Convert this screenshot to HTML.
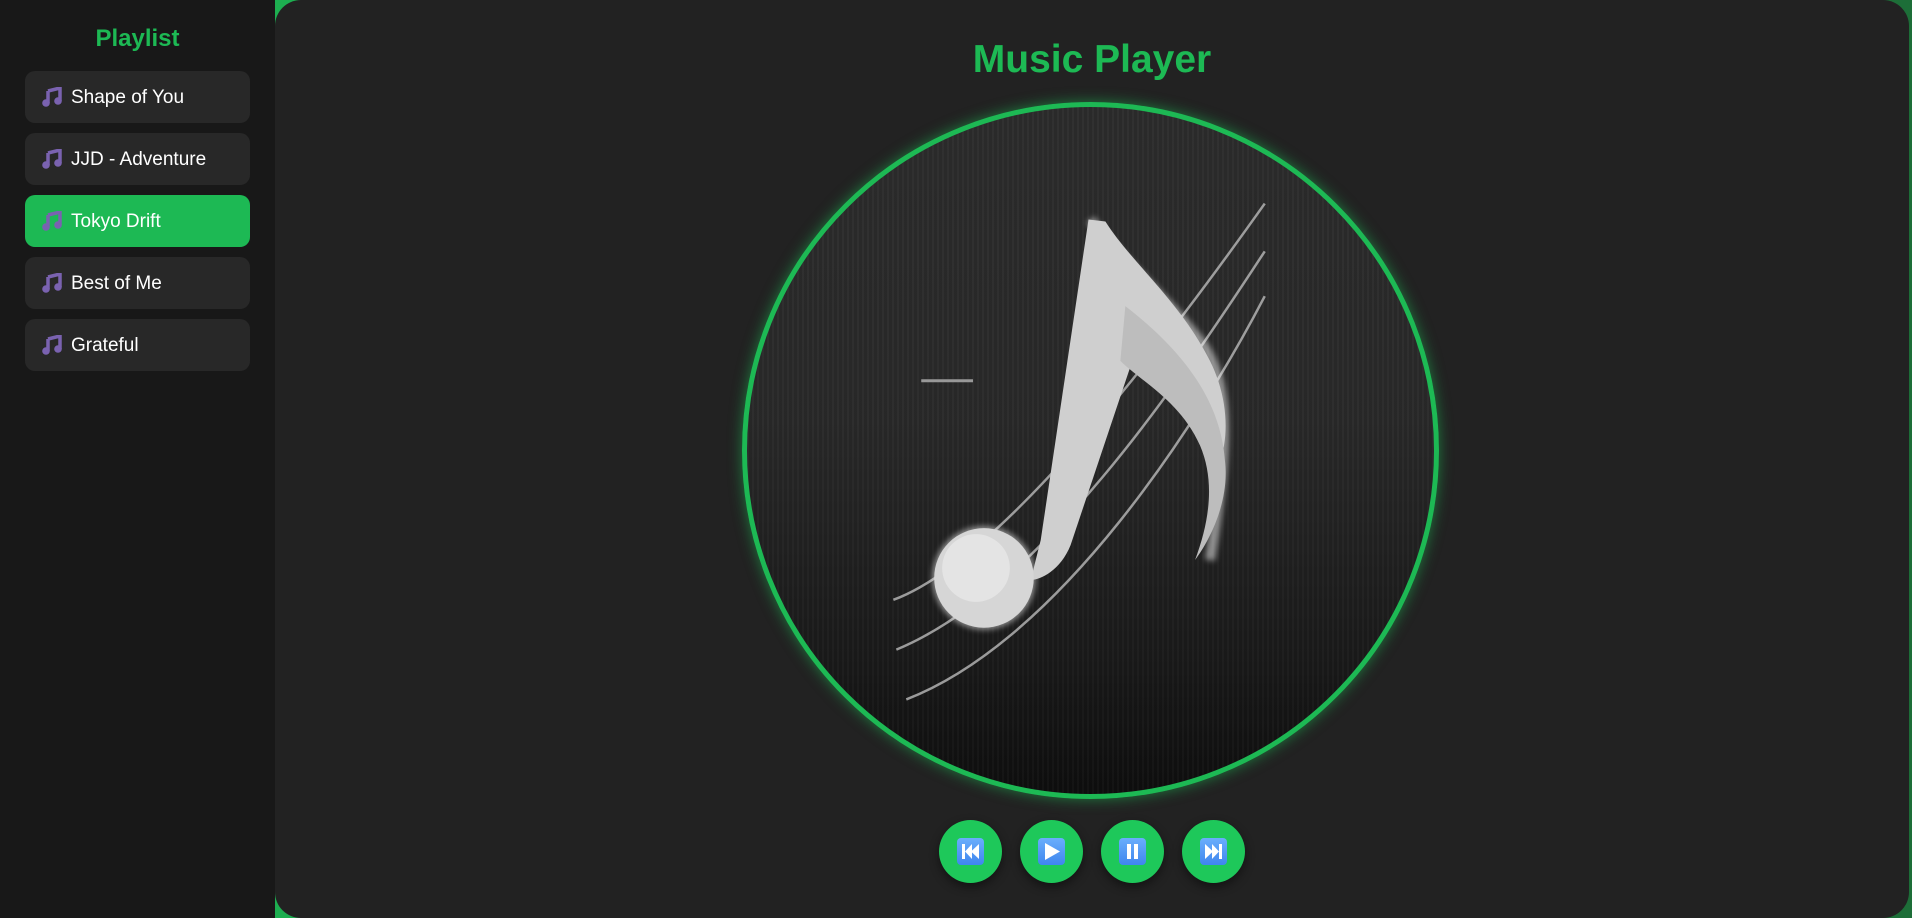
<!DOCTYPE html>
<html><head><meta charset="utf-8"><style>
*{margin:0;padding:0;box-sizing:border-box}
html,body{width:1912px;height:918px;overflow:hidden}
body{background:linear-gradient(90deg,#1db954 0%,#1d6e38 100%);font-family:"Liberation Sans",Arial,sans-serif;position:relative}
.side{position:absolute;left:0;top:0;width:275px;height:918px;background:#181818;}
.side h2{position:absolute;top:25px;left:0;width:275px;text-align:center;color:#1db954;font-size:24px;font-weight:bold}
.item{position:absolute;left:25px;width:225px;height:52px;border-radius:10px;background:#282828;color:#fff;font-size:19px;line-height:54px;padding-left:46px}
.item.act{background:#1db954}
.item svg{position:absolute;left:17px;top:16px}
.main{position:absolute;left:275px;top:0;width:1634px;height:918px;background:#222;border-radius:26px}
.title{position:absolute;left:0;width:1634px;top:38px;text-align:center;color:#1db954;font-size:39px;font-weight:bold}
.disc{position:absolute;left:467px;top:102px;width:697px;height:697px;border-radius:50%;border:5px solid #1db954;box-shadow:0 0 14px rgba(29,185,84,.6);overflow:hidden;background:repeating-linear-gradient(90deg,rgba(255,255,255,.025) 0 2px,rgba(0,0,0,.04) 2px 5px),linear-gradient(#2c2c2c 0%,#292929 45%,#1a1a1a 80%,#0e0e0e 100%)}
.btn{position:absolute;top:820px;width:63px;height:63px;border-radius:50%;background:#1ec85a;box-shadow:0 4px 10px rgba(0,0,0,.45)}
.btn .ic{position:absolute;left:18px;top:18px;width:27px;height:27px;border-radius:4px;background:linear-gradient(#6aaefc,#3f86ee)}
.btn svg{position:absolute;left:0;top:0}
</style></head><body>
<div class="side">
<h2>Playlist</h2>
<div class="item" style="top:71px"><svg width="20" height="20" viewBox="0 0 20 20"><path d="M6 4 L18 1 L18 14 M6 4 L6 16" stroke="#7a62b0" stroke-width="3.5" fill="none"/><circle cx="4" cy="16" r="3.8" fill="#7a62b0"/><circle cx="16" cy="14" r="3.8" fill="#7a62b0"/></svg>Shape of You</div>
<div class="item" style="top:133px"><svg width="20" height="20" viewBox="0 0 20 20"><path d="M6 4 L18 1 L18 14 M6 4 L6 16" stroke="#7a62b0" stroke-width="3.5" fill="none"/><circle cx="4" cy="16" r="3.8" fill="#7a62b0"/><circle cx="16" cy="14" r="3.8" fill="#7a62b0"/></svg>JJD - Adventure</div>
<div class="item act" style="top:195px"><svg width="20" height="20" viewBox="0 0 20 20"><path d="M6 4 L18 1 L18 14 M6 4 L6 16" stroke="#7a62b0" stroke-width="3.5" fill="none"/><circle cx="4" cy="16" r="3.8" fill="#7a62b0"/><circle cx="16" cy="14" r="3.8" fill="#7a62b0"/></svg>Tokyo Drift</div>
<div class="item" style="top:257px"><svg width="20" height="20" viewBox="0 0 20 20"><path d="M6 4 L18 1 L18 14 M6 4 L6 16" stroke="#7a62b0" stroke-width="3.5" fill="none"/><circle cx="4" cy="16" r="3.8" fill="#7a62b0"/><circle cx="16" cy="14" r="3.8" fill="#7a62b0"/></svg>Best of Me</div>
<div class="item" style="top:319px"><svg width="20" height="20" viewBox="0 0 20 20"><path d="M6 4 L18 1 L18 14 M6 4 L6 16" stroke="#7a62b0" stroke-width="3.5" fill="none"/><circle cx="4" cy="16" r="3.8" fill="#7a62b0"/><circle cx="16" cy="14" r="3.8" fill="#7a62b0"/></svg>Grateful</div>
</div>
<div class="main">
<div class="title">Music Player</div>
<div class="disc">
<svg width="687" height="687" viewBox="5 5 690 690" style="position:absolute;left:0;top:0">
<defs><filter id="g"><feGaussianBlur stdDeviation="3"/></filter></defs>
<g stroke="#bbb" stroke-width="2.5" fill="none" opacity=".8">
<path d="M152 500 C260 460 420 250 525 102"/>
<path d="M155 550 C300 490 440 280 525 150"/>
<path d="M165 600 C320 540 460 320 525 195"/>
</g>
<path d="M180 280 L232 280" stroke="#999" stroke-width="3"/>
<g filter="url(#g)" opacity=".5"><circle cx="243" cy="478" r="52" fill="#fff"/><path d="M350 118 C380 160 420 190 460 240 C490 280 490 340 470 460" stroke="#fff" stroke-width="10" fill="none"/></g>
<path d="M348 118 L365 120 C390 160 440 200 470 260 C490 300 488 340 480 360 C470 320 440 290 398 260 L392 260 L330 445 C320 470 300 480 290 480 L300 440 Z" fill="#cfcfcf"/>
<path d="M385 205 C430 240 480 290 485 360 C490 400 470 440 455 460 C470 420 475 380 460 345 C440 300 400 280 380 260 Z" fill="#bdbdbd"/>
<circle cx="243" cy="478" r="50" fill="#d6d6d6"/>
<circle cx="235" cy="468" r="34" fill="#e4e4e4"/>
</svg>
</div>
<div class="btn" style="left:664px"><div class="ic"></div><svg width="63" height="63"><rect x="23" y="24" width="3" height="15" fill="#fff"/><path d="M26 31.5 L33 24 V39Z M32 31.5 L40 24 V39Z" fill="#fff"/></svg></div>
<div class="btn" style="left:745px"><div class="ic"></div><svg width="63" height="63"><path d="M25 23 L40 31.5 L25 40Z" fill="#fff"/></svg></div>
<div class="btn" style="left:826px"><div class="ic"></div><svg width="63" height="63"><rect x="26" y="24" width="4" height="15" fill="#fff"/><rect x="33" y="24" width="4" height="15" fill="#fff"/></svg></div>
<div class="btn" style="left:907px"><div class="ic"></div><svg width="63" height="63"><path d="M23 24 L31 31.5 L23 39Z M30 24 L37 31.5 L30 39Z" fill="#fff"/><rect x="37" y="24" width="3" height="15" fill="#fff"/></svg></div>
</div>
</body></html>
